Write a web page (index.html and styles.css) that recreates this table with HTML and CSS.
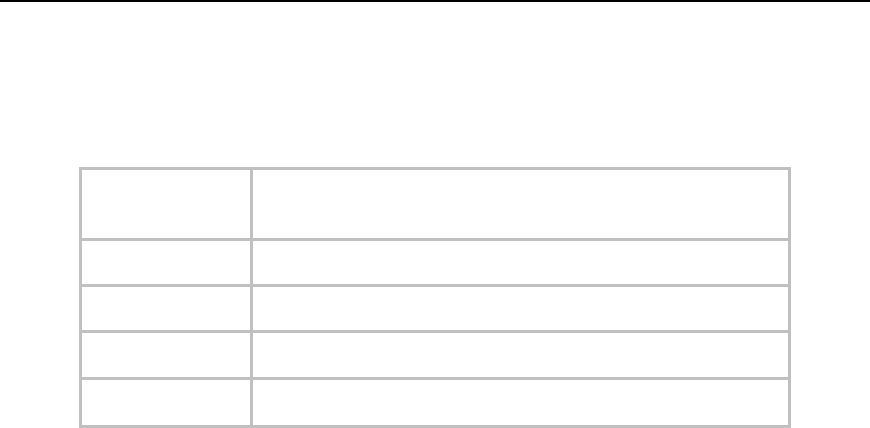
FILE: index.html
```html
<!DOCTYPE html>
<html>
<head>
<meta charset="utf-8">
<link rel="stylesheet" href="styles.css">
</head>
<body>
<div class="topline"></div>
<div class="grid">
  <div class="cell r1"></div><div class="cell r1"></div>
  <div class="cell"></div><div class="cell"></div>
  <div class="cell"></div><div class="cell"></div>
  <div class="cell"></div><div class="cell"></div>
  <div class="cell"></div><div class="cell"></div>
</div>
</body>
</html>
```
FILE: styles.css
```css
html, body {
  margin: 0;
  padding: 0;
  background: #ffffff;
  font-family: "Liberation Sans", Arial, sans-serif;
}
.topline {
  height: 2px;
  background: #000000;
}
.grid {
  margin: 165px 0 0 79px;
  width: 712px;
  box-sizing: border-box;
  display: grid;
  grid-template-columns: 168px 535px;
  grid-template-rows: 68px 43px 43px 44px 45px;
  gap: 3px;
  padding: 3px;
  background: #c0c0c0;
}
.cell {
  background: #ffffff;
}
```
